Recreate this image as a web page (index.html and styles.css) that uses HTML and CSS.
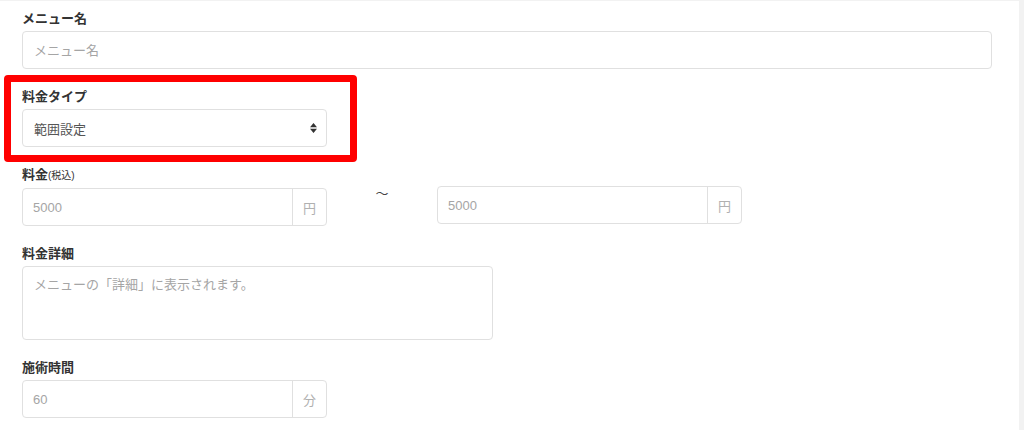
FILE: index.html
```html
<!DOCTYPE html>
<html lang="ja">
<head>
<meta charset="utf-8">
<title>メニュー編集</title>
<link rel="stylesheet" href="styles.css">
</head>
<body>
<div class="panel">
  <form class="form">
    <div class="group">
      <label class="label">メニュー名</label>
      <input class="control full" type="text" placeholder="メニュー名">
    </div>
    <div class="group">
      <label class="label">料金タイプ</label>
      <div class="control select half">
        <span class="select-value">範囲設定</span>
        <svg class="select-arrow" width="7" height="10" viewBox="0 0 7 10"><path d="M0 4.2 L3.5 0 L7 4.2 Z M0 5.8 L3.5 10 L7 5.8 Z" fill="#333"/></svg>
      </div>
    </div>
    <div class="group">
      <label class="label">料金<small class="label-note">(税込)</small></label>
      <div class="range">
        <div class="input-group half">
          <input class="ig-input" type="text" placeholder="5000">
          <span class="addon">円</span>
        </div>
        <span class="tilde">〜</span>
        <div class="input-group half range-end">
          <input class="ig-input" type="text" placeholder="5000">
          <span class="addon">円</span>
        </div>
      </div>
    </div>
    <div class="group">
      <label class="label">料金詳細</label>
      <textarea class="control textarea" placeholder="メニューの「詳細」に表示されます。"></textarea>
    </div>
    <div class="group">
      <label class="label">施術時間</label>
      <div class="input-group half">
        <input class="ig-input" type="text" placeholder="60">
        <span class="addon">分</span>
      </div>
    </div>
  </form>
  <div class="highlight"></div>
</div>
</body>
</html>
```
FILE: styles.css
```css
* { box-sizing: border-box; }
html, body { margin: 0; padding: 0; }
body {
  background: #f2f2f2;
  font-family: "Liberation Sans", "Noto Sans CJK JP", sans-serif;
  color: #333;
  padding-top: 1px;
  height: 430px;
  overflow: hidden;
}
.panel {
  position: relative;
  width: 1019px;
  height: 429px;
  background: #fff;
}
.form {
  padding: 9px 0 0 22px;
}
.group {
  margin-bottom: 19px;
}
.group-last {
  margin-bottom: 0;
}
.label {
  display: block;
  font-size: 13px;
  line-height: 18px;
  font-weight: bold;
  color: #333;
  margin-bottom: 3px;
}
.label-note {
  font-size: 10px;
  font-weight: normal;
}
.control {
  display: block;
  height: 38px;
  border: 1px solid #e0e0e0;
  border-radius: 4px;
  background: #fff;
  padding: 0 11px;
  font-family: inherit;
  font-size: 13px;
  color: #555;
  outline: none;
}
.control::placeholder, .ig-input::placeholder {
  color: #a5a5a5;
  opacity: 1;
}
.full { width: 970px; }
.half { width: 305px; }
.select {
  display: flex;
  align-items: center;
  justify-content: space-between;
  padding-right: 9px;
}
.select-value { color: #555; }
.select-arrow { display: block; }
.range {
  display: flex;
  align-items: flex-start;
}
.tilde {
  width: 110px;
  text-align: center;
  font-size: 13px;
  line-height: 18px;
  margin-top: -3px;
  color: #444;
}
.range-end { margin-top: -2px; }
.input-group {
  display: flex;
  height: 38px;
  border: 1px solid #e0e0e0;
  border-radius: 4px;
  background: #fff;
  overflow: hidden;
}
.ig-input {
  flex: 1;
  min-width: 0;
  border: 0;
  outline: none;
  padding: 0 10px;
  font-family: inherit;
  font-size: 13px;
  color: #555;
  background: transparent;
}
.addon {
  width: 34px;
  border-left: 1px solid #e0e0e0;
  display: flex;
  align-items: center;
  justify-content: center;
  font-size: 13px;
  color: #b0b0b0;
}
.textarea {
  width: 471px;
  height: 74px;
  padding: 9px 11px;
  line-height: 18px;
  resize: none;
}
.highlight {
  position: absolute;
  left: 4px;
  top: 74px;
  width: 353px;
  height: 87px;
  border: 7px solid #ff0000;
  border-radius: 4px;
  pointer-events: none;
}
```
